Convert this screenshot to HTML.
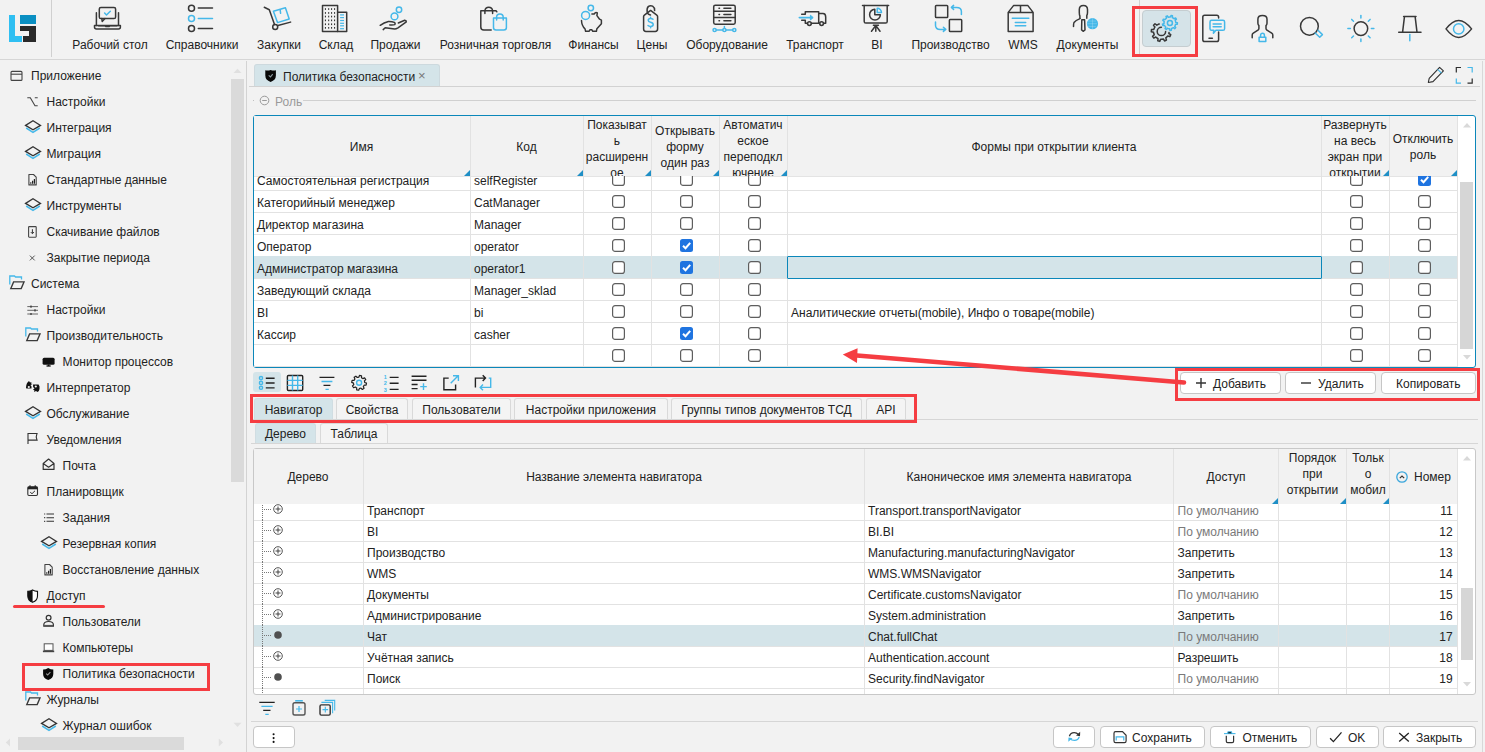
<!DOCTYPE html><html><head><meta charset="utf-8"><style>
html,body{margin:0;padding:0;}
body{width:1485px;height:752px;overflow:hidden;position:relative;background:#f2f2f2;font-family:"Liberation Sans",sans-serif;color:#222;}
.a{position:absolute;}
.t{position:absolute;font-size:12px;line-height:16px;white-space:nowrap;}
.c{text-align:center;}
.r{text-align:right;}
svg{overflow:visible}
</style></head><body>

<div class="a" style="left:0px;top:59px;width:1485px;height:1px;background:#d6d6d6"></div>
<div class="a" style="left:51px;top:0px;width:1px;height:57px;background:#d0d0d0"></div>
<div class="a" style="left:1139px;top:0px;width:1px;height:54px;background:#d0d0d0"></div>
<svg class="a" style="left:9px;top:15px;" width="28" height="28" viewBox="0 0 28 28">
<rect x="0" y="0" width="6" height="27" fill="#2fbff2"/>
<rect x="0" y="21" width="13" height="6" fill="#2fbff2"/>
<rect x="11" y="0" width="16" height="9" fill="#0a8fc2"/>
<path d="M11 11 H27 V27 H14 V21 H20 V16 H11 Z" fill="#2a2a2a"/>
</svg>
<svg class="a" style="left:88px;top:2px;" width="40" height="34" viewBox="0 0 40 34"><rect x="11.3" y="5.4" width="16.3" height="11.1" rx="1.6" stroke="#383838" stroke-width="1.5" fill="none" stroke-linecap="round" stroke-linejoin="round"/>
<path d="M13.8 16.5 L14.2 19.4 L17 16.5" stroke="#383838" stroke-width="1.5" fill="none" stroke-linecap="round" stroke-linejoin="round"/>
<path d="M16.6 11 L18.5 13 L22.3 9.2" stroke="#45b8e9" stroke-width="1.5" fill="none" stroke-linecap="round" stroke-linejoin="round"/>
<path d="M8.4 10.8 V23.5 M30.5 10.8 V23.5" stroke="#383838" stroke-width="1.5" fill="none" stroke-linecap="round" stroke-linejoin="round"/>
<path d="M6.5 23.6 H32.4 V25 Q32.4 27 30.4 27 H8.5 Q6.5 27 6.5 25 Z" stroke="#383838" stroke-width="1.5" fill="none" stroke-linecap="round" stroke-linejoin="round"/>
<path d="M10.5 23.8 H17.2 L18 24.6 H21 L21.8 23.8 H29" stroke="#383838" stroke-width="1.5" fill="none" stroke-linecap="round" stroke-linejoin="round"/></svg>
<svg class="a" style="left:182px;top:2px;" width="40" height="34" viewBox="0 0 40 34"><circle cx="9.5" cy="6.3" r="3" stroke="#383838" stroke-width="1.5" fill="none" stroke-linecap="round" stroke-linejoin="round"/><circle cx="9.5" cy="16.4" r="3" stroke="#45b8e9" stroke-width="1.5" fill="none" stroke-linecap="round" stroke-linejoin="round"/><circle cx="9.5" cy="26.4" r="3" stroke="#383838" stroke-width="1.5" fill="none" stroke-linecap="round" stroke-linejoin="round"/>
<path d="M16.3 6.1 H30.5 M16.3 26.5 H30.5" stroke="#383838" stroke-width="1.5" fill="none" stroke-linecap="round" stroke-linejoin="round"/><path d="M16.3 16.4 H30.5" stroke="#45b8e9" stroke-width="1.5" fill="none" stroke-linecap="round" stroke-linejoin="round"/></svg>
<svg class="a" style="left:258px;top:2px;" width="40" height="34" viewBox="0 0 40 34"><path d="M6.3 5.3 L11.3 7.7 L16.5 22.4" stroke="#383838" stroke-width="1.5" fill="none" stroke-linecap="round" stroke-linejoin="round"/><path d="M19.9 23.5 L32.6 20.1" stroke="#383838" stroke-width="1.5" fill="none" stroke-linecap="round" stroke-linejoin="round"/>
<circle cx="17.2" cy="25.1" r="2.5" stroke="#383838" stroke-width="1.5" fill="none" stroke-linecap="round" stroke-linejoin="round"/>
<path d="M15.4 9.3 L27.4 5.7 L31.2 17 L19.5 20.6 Z" stroke="#45b8e9" stroke-width="1.5" fill="none" stroke-linecap="round" stroke-linejoin="round"/><path d="M22.2 8.1 L22.6 11.3" stroke="#45b8e9" stroke-width="1.5" fill="none" stroke-linecap="round" stroke-linejoin="round"/></svg>
<svg class="a" style="left:315px;top:2px;" width="40" height="34" viewBox="0 0 40 34"><rect x="7.5" y="3.4" width="15.1" height="26" stroke="#383838" stroke-width="1.5" fill="none" stroke-linecap="round" stroke-linejoin="round"/><path d="M22.6 10.2 H31.7 V29.4 H22.6" stroke="#383838" stroke-width="1.5" fill="none" stroke-linecap="round" stroke-linejoin="round"/><rect x="9.9" y="6.2" width="1.1" height="1.7" fill="#383838"/><rect x="9.9" y="10.1" width="1.1" height="1.7" fill="#383838"/><rect x="9.9" y="13.7" width="1.1" height="1.7" fill="#383838"/><rect x="9.9" y="17.5" width="1.1" height="1.7" fill="#383838"/><rect x="9.9" y="21.4" width="1.1" height="1.7" fill="#383838"/><rect x="9.9" y="25.0" width="1.1" height="1.7" fill="#383838"/><rect x="13.1" y="6.2" width="1.1" height="1.7" fill="#383838"/><rect x="13.1" y="10.1" width="1.1" height="1.7" fill="#383838"/><rect x="13.1" y="13.7" width="1.1" height="1.7" fill="#383838"/><rect x="13.1" y="17.5" width="1.1" height="1.7" fill="#383838"/><rect x="13.1" y="21.4" width="1.1" height="1.7" fill="#383838"/><rect x="13.1" y="25.0" width="1.1" height="1.7" fill="#383838"/><rect x="16.0" y="6.2" width="1.1" height="1.7" fill="#383838"/><rect x="16.0" y="10.1" width="1.1" height="1.7" fill="#383838"/><rect x="16.0" y="13.7" width="1.1" height="1.7" fill="#383838"/><rect x="16.0" y="17.5" width="1.1" height="1.7" fill="#383838"/><rect x="16.0" y="21.4" width="1.1" height="1.7" fill="#383838"/><rect x="16.0" y="25.0" width="1.1" height="1.7" fill="#383838"/><rect x="19.0" y="6.2" width="1.1" height="1.7" fill="#383838"/><rect x="19.0" y="10.1" width="1.1" height="1.7" fill="#383838"/><rect x="19.0" y="13.7" width="1.1" height="1.7" fill="#383838"/><rect x="19.0" y="17.5" width="1.1" height="1.7" fill="#383838"/><rect x="19.0" y="21.4" width="1.1" height="1.7" fill="#383838"/><rect x="19.0" y="25.0" width="1.1" height="1.7" fill="#383838"/><path d="M25.1 12.9 H29" stroke="#45b8e9" stroke-width="1.2"/><path d="M25.1 15.6 H29" stroke="#45b8e9" stroke-width="1.2"/><path d="M25.1 18.5 H29" stroke="#45b8e9" stroke-width="1.2"/><path d="M25.1 21.3 H29" stroke="#45b8e9" stroke-width="1.2"/><path d="M25.1 23.8 H29" stroke="#45b8e9" stroke-width="1.2"/><path d="M25.1 26.7 H29" stroke="#45b8e9" stroke-width="1.2"/></svg>
<svg class="a" style="left:373px;top:2px;" width="40" height="34" viewBox="0 0 40 34"><circle cx="21.5" cy="14.4" r="3.4" stroke="#45b8e9" stroke-width="1.5" fill="none" stroke-linecap="round" stroke-linejoin="round"/><circle cx="26" cy="7.7" r="2.7" stroke="#45b8e9" stroke-width="1.5" fill="none" stroke-linecap="round" stroke-linejoin="round"/>
<path d="M7.2 23.3 Q11 20.6 15.4 19.5 Q19 19.4 21.3 20.4 Q22.8 21.6 21.6 22.6 Q20.5 23.1 16.7 22.9" stroke="#383838" stroke-width="1.5" fill="none" stroke-linecap="round" stroke-linejoin="round"/>
<path d="M10.2 27.6 L12.2 25.8 L21.7 27.1 Q23 27 25 25.8 L33.3 19.8 Q33.5 18.6 31.7 18.3 L25.3 21" stroke="#383838" stroke-width="1.5" fill="none" stroke-linecap="round" stroke-linejoin="round"/></svg>
<svg class="a" style="left:474px;top:2px;" width="40" height="34" viewBox="0 0 40 34"><path d="M17.2 28 H9.8 Q6.8 28 6.8 25 V8.8 H22 L22.8 9.8" stroke="#383838" stroke-width="1.5" fill="none" stroke-linecap="round" stroke-linejoin="round"/>
<path d="M10.9 11.5 V8.5 A3.9 3.9 0 0 1 18.6 8.5 V11.5" stroke="#383838" stroke-width="1.5" fill="none" stroke-linecap="round" stroke-linejoin="round"/>
<path d="M19.5 16 H32.4 V25.5 Q32.4 28 29.9 28 H22 Q19.5 28 19.5 25.5 Z" stroke="#45b8e9" stroke-width="1.5" fill="none" stroke-linecap="round" stroke-linejoin="round"/>
<path d="M22.6 18.1 V15.3 A3.3 3.3 0 0 1 29.2 15.3 V18.1" stroke="#45b8e9" stroke-width="1.5" fill="none" stroke-linecap="round" stroke-linejoin="round"/></svg>
<svg class="a" style="left:572px;top:2px;" width="40" height="34" viewBox="0 0 40 34"><circle cx="13.6" cy="13.4" r="4" stroke="#45b8e9" stroke-width="1.5" fill="none" stroke-linecap="round" stroke-linejoin="round"/><circle cx="18.8" cy="6" r="2.7" stroke="#45b8e9" stroke-width="1.5" fill="none" stroke-linecap="round" stroke-linejoin="round"/>
<path d="M9.5 18.5 Q9.6 23.5 13.1 27.1 L13.6 29.3 H17.2 L17.9 27.8 H19.9 L20.8 29.3 H24.4 L24.9 26.7 L29.4 21.7 V18.1 L27.6 17.2 L24.9 13.6 L25.3 10.9 Q24.4 10.2 23.5 10.6 L22.2 12 H19.9" stroke="#383838" stroke-width="1.5" fill="none" stroke-linecap="round" stroke-linejoin="round"/></svg>
<svg class="a" style="left:632px;top:2px;" width="40" height="34" viewBox="0 0 40 34"><path d="M11.6 27 V14.6 Q11.6 13.7 12.4 13.1 L18.6 8.4 L24.8 13.1 Q25.6 13.7 25.6 14.6 V27 Q25.6 29.4 23.2 29.4 H14 Q11.6 29.4 11.6 27 Z" stroke="#383838" stroke-width="1.5" fill="none" stroke-linecap="round" stroke-linejoin="round"/>
<path d="M18.5 13 Q15.6 12.6 15.2 10 Q14.6 6 16.5 4.4 Q18.5 3 20.6 4.2 Q22.8 5.6 22.6 8.6" stroke="#383838" stroke-width="1.5" fill="none" stroke-linecap="round" stroke-linejoin="round"/>
<path d="M21 17.3 Q20.2 16.5 18.6 16.5 Q16.2 16.5 16.2 18.3 Q16.2 19.7 18.6 20.3 Q21.2 20.9 21.2 22.6 Q21.2 24.5 18.6 24.5 Q16.8 24.5 16 23.6 M18.6 15.3 V16.5 M18.6 24.5 V25.8" stroke="#45b8e9" stroke-width="1.5" fill="none" stroke-linecap="round" stroke-linejoin="round"/></svg>
<svg class="a" style="left:704px;top:2px;" width="40" height="34" viewBox="0 0 40 34"><rect x="9.7" y="3.2" width="21.5" height="19" rx="1.6" stroke="#383838" stroke-width="1.5" fill="none" stroke-linecap="round" stroke-linejoin="round"/>
<path d="M9.7 9.3 H31.2 M9.7 15.4 H31.2" stroke="#383838" stroke-width="1.5" fill="none" stroke-linecap="round" stroke-linejoin="round"/>
<path d="M15 6.3 H15.5 M15 12.4 H15.5 M15 18.7 H15.5 M19.9 6.3 H26.9 M19.9 12.4 H26.9 M19.9 18.7 H26.9" stroke="#383838" stroke-width="1.5" fill="none" stroke-linecap="round" stroke-linejoin="round"/>
<path d="M12.3 28 H18.7 M22.1 28 H28.6 M20.4 24.6 V26.3" stroke="#45b8e9" stroke-width="1.5" fill="none" stroke-linecap="round" stroke-linejoin="round"/>
<circle cx="10.6" cy="28" r="1.6" stroke="#45b8e9" stroke-width="1.5" fill="none" stroke-linecap="round" stroke-linejoin="round"/><circle cx="20.4" cy="28" r="1.6" stroke="#45b8e9" stroke-width="1.5" fill="none" stroke-linecap="round" stroke-linejoin="round"/><circle cx="30.3" cy="28" r="1.6" stroke="#45b8e9" stroke-width="1.5" fill="none" stroke-linecap="round" stroke-linejoin="round"/></svg>
<svg class="a" style="left:792px;top:2px;" width="40" height="34" viewBox="0 0 40 34"><path d="M9.7 12.2 H13.3 V9.7 H26.7 V21.3 H19.4" stroke="#383838" stroke-width="1.5" fill="none" stroke-linecap="round" stroke-linejoin="round"/>
<path d="M9.7 18.3 H13.3 V21.3 H15.5" stroke="#383838" stroke-width="1.5" fill="none" stroke-linecap="round" stroke-linejoin="round"/>
<path d="M26.7 11.5 H31 Q33.7 11.5 33.7 15 V21.3 H31.5 M27.7 21.3 H26.7" stroke="#383838" stroke-width="1.5" fill="none" stroke-linecap="round" stroke-linejoin="round"/>
<circle cx="17.4" cy="21.6" r="1.9" stroke="#383838" stroke-width="1.5" fill="none" stroke-linecap="round" stroke-linejoin="round"/><circle cx="29.6" cy="21.6" r="1.9" stroke="#383838" stroke-width="1.5" fill="none" stroke-linecap="round" stroke-linejoin="round"/>
<path d="M7.3 15.6 H19" stroke="#45b8e9" stroke-width="1.6" stroke-linecap="round"/><path d="M18.4 13.2 L21.2 15.6 L18.4 18 Z" fill="#45b8e9" stroke="#45b8e9" stroke-width="1" stroke-linejoin="round"/></svg>
<svg class="a" style="left:856px;top:2px;" width="40" height="34" viewBox="0 0 40 34"><path d="M6.5 3.6 H32.6" stroke="#383838" stroke-width="1.5" fill="none" stroke-linecap="round" stroke-linejoin="round"/><path d="M8.2 3.6 V19.4 Q8.2 21 9.8 21 H29.6 Q31.2 21 31.2 19.4 V3.6" stroke="#383838" stroke-width="1.5" fill="none" stroke-linecap="round" stroke-linejoin="round"/>
<path d="M17.4 23.3 H22.4 M19.8 23.5 V29.3 M19.8 23.5 L15.5 29.3 M19.8 23.5 L24 29.3" stroke="#383838" stroke-width="1.5" fill="none" stroke-linecap="round" stroke-linejoin="round"/>
<path d="M18.8 7.2 A5.4 5.4 0 1 0 24.4 12.8 H18.8 Z" stroke="#383838" stroke-width="1.5" fill="none" stroke-linecap="round" stroke-linejoin="round"/>
<path d="M21.2 6.2 A4.3 4.3 0 0 1 25.5 10.5 H21.2 Z" stroke="#45b8e9" stroke-width="1.5" fill="none" stroke-linecap="round" stroke-linejoin="round"/></svg>
<svg class="a" style="left:928px;top:2px;" width="40" height="34" viewBox="0 0 40 34"><rect x="7.5" y="3.4" width="12.2" height="12.2" rx="0.8" stroke="#383838" stroke-width="1.5" fill="none" stroke-linecap="round" stroke-linejoin="round"/><rect x="21.4" y="17.4" width="12.3" height="12.2" rx="0.8" stroke="#383838" stroke-width="1.5" fill="none" stroke-linecap="round" stroke-linejoin="round"/>
<path d="M33.4 12.6 V9.5 Q33.4 5.4 28.6 5.4 H23.6 M25.6 3.4 L23.4 5.4 L25.6 7.5" stroke="#45b8e9" stroke-width="1.5" fill="none" stroke-linecap="round" stroke-linejoin="round"/>
<path d="M7.5 20.1 V23.2 Q7.5 27.4 12.2 27.4 H17.6 M15.4 25.3 L17.8 27.4 L15.4 29.4" stroke="#45b8e9" stroke-width="1.5" fill="none" stroke-linecap="round" stroke-linejoin="round"/></svg>
<svg class="a" style="left:1001px;top:2px;" width="40" height="34" viewBox="0 0 40 34"><path d="M7.2 10.4 H32.1 V29.4 H7.2 Z M7.2 10.4 L12.7 3.4 H26.7 L32.1 10.4 M19.5 3.4 V10.4" stroke="#383838" stroke-width="1.5" fill="none" stroke-linecap="round" stroke-linejoin="round"/>
<path d="M11.3 16.3 H27.8 M14.3 20.4 H24.7 M14.3 23.8 H24.7" stroke="#45b8e9" stroke-width="1.5" fill="none" stroke-linecap="round" stroke-linejoin="round"/></svg>
<svg class="a" style="left:1066px;top:2px;" width="40" height="34" viewBox="0 0 40 34"><path d="M13.9 16.3 V14 Q13.3 13 13.3 10.5 V7.5 Q13.3 3.4 17.4 3.4 Q21.5 3.4 21.5 7.5 V10.5 Q21.5 12.5 20.8 13.5 V16.3" stroke="#383838" stroke-width="1.5" fill="none" stroke-linecap="round" stroke-linejoin="round"/>
<path d="M14 16.6 Q9.5 18.5 8 20.5 Q7.5 21.5 7.5 24.4" stroke="#383838" stroke-width="1.5" fill="none" stroke-linecap="round" stroke-linejoin="round"/>
<path d="M15.8 17.8 H18.6 L19 27.9 L17.4 29.3 L15.6 27.9 Z" stroke="#383838" stroke-width="1.5" fill="none" stroke-linecap="round" stroke-linejoin="round"/>
<circle cx="26.5" cy="21.7" r="5.6" fill="#45b8e9"/>
<path d="M21.5 21.7 H31.5 M26.5 16.5 V27 M22.5 19 H30.5 M22.5 24.4 H30.5" stroke="#fff" stroke-width="0.5" stroke-dasharray="1 1" opacity="0.8"/></svg>
<div class="a" style="left:1142px;top:10px;width:49px;height:37px;background:#d5e3e8;border:1px solid #c5cdd0;border-radius:4px;box-sizing:border-box"></div>
<svg class="a" style="left:1146px;top:10px;" width="40" height="36" viewBox="0 0 40 36"><path d="M23.90 7.00 L24.40 7.02 L25.05 5.49 L26.47 5.85 L26.30 7.51 L27.70 8.38 L28.06 8.72 L29.55 7.96 L30.40 9.16 L29.20 10.32 L29.71 11.88 L29.78 12.37 L31.40 12.75 L31.29 14.21 L29.62 14.33 L29.01 15.85 L28.74 16.27 L29.74 17.60 L28.72 18.65 L27.36 17.68 L25.91 18.45 L25.44 18.59 L25.35 20.26 L23.89 20.40 L23.48 18.79 L21.88 18.44 L21.42 18.25 L20.28 19.47 L19.07 18.64 L19.80 17.14 L18.79 15.85 L18.56 15.41 L16.91 15.61 L16.51 14.20 L18.03 13.51 L18.09 11.87 L18.20 11.39 L16.80 10.48 L17.41 9.14 L19.01 9.60 L20.11 8.38 L20.50 8.08 L20.02 6.48 L21.34 5.85 L22.28 7.23 Z" stroke="#45b8e9" stroke-width="1.5" fill="none" stroke-linecap="round" stroke-linejoin="round" stroke-width="1.3"/><circle cx="23.9" cy="12.9" r="2.5" stroke="#45b8e9" stroke-width="1.5" fill="none" stroke-linecap="round" stroke-linejoin="round" stroke-width="1.4"/>
<path d="M19.6 21.4 A4.2 4.2 0 1 1 15.4 17.2" stroke="#383838" stroke-width="1.5" fill="none" stroke-linecap="round" stroke-linejoin="round" stroke-width="1.4"/></svg>
<svg class="a" style="left:1146px;top:10px;" width="40" height="36" viewBox="0 0 40 36"><path d="M23.04 22.43 L22.84 23.50 L24.76 24.74 L23.88 26.63 L21.70 25.96 L20.63 27.19 L19.79 27.88 L20.47 30.06 L18.58 30.95 L17.34 29.03 L15.73 29.29 L14.64 29.27 L13.76 31.38 L11.74 30.84 L12.02 28.58 L10.62 27.74 L9.80 27.03 L7.77 28.08 L6.56 26.37 L8.24 24.81 L7.70 23.27 L7.53 22.20 L5.30 21.70 L5.48 19.61 L7.76 19.50 L8.34 17.97 L8.90 17.04 L7.51 15.22 L8.99 13.74 L10.81 15.12 L12.24 14.33 L13.26 13.97" stroke="#383838" stroke-width="1.5" fill="none" stroke-linecap="round" stroke-linejoin="round" stroke-width="1.3"/></svg>
<svg class="a" style="left:1198px;top:10px;" width="35" height="36" viewBox="0 0 35 36"><path d="M20.6 8 V7.1 Q20.6 5.3 18.8 5.3 H6.6 Q4.8 5.3 4.8 7.1 V29.8 Q4.8 31.6 6.6 31.6 H18.8 Q20.6 31.6 20.6 29.8 V22" stroke="#383838" stroke-width="1.5" fill="none" stroke-linecap="round" stroke-linejoin="round"/><path d="M11 28.2 H14.4" stroke="#383838" stroke-width="1.5" fill="none" stroke-linecap="round" stroke-linejoin="round"/>
<path d="M13.5 10.3 H25 Q26.6 10.3 26.6 11.9 V18.7 Q26.6 20.3 25 20.3 H17.9 L15.4 23.2 L15.8 20.3 H13.5 Q12 20.3 12 18.7 V11.9 Q12 10.3 13.5 10.3 Z" stroke="#45b8e9" stroke-width="1.5" fill="none" stroke-linecap="round" stroke-linejoin="round"/>
<path d="M15.1 13.9 H23.2 M15.1 16.7 H23.2" stroke="#45b8e9" stroke-width="1.5" fill="none" stroke-linecap="round" stroke-linejoin="round" stroke-width="1.3"/></svg>
<svg class="a" style="left:1245px;top:10px;" width="35" height="36" viewBox="0 0 35 36"><path d="M7.2 27.7 V25 Q7.2 23.8 8.3 23.1 L13.3 19.8 Q13.9 19.4 13.9 18.6 V15.6 Q12.9 14.6 12.9 13.2 V9.2 Q12.9 5.5 17.45 5.5 Q22 5.5 22 9.2 V13.2 Q22 14.6 21 15.6 V18.6 Q21 19.4 21.6 19.8 L26.7 23.1 Q27.8 23.8 27.8 25 V27.7" stroke="#383838" stroke-width="1.5" fill="none" stroke-linecap="round" stroke-linejoin="round"/>
<rect x="14.1" y="27.3" width="6.7" height="4.3" stroke="#45b8e9" stroke-width="1.5" fill="none" stroke-linecap="round" stroke-linejoin="round"/><path d="M15.6 27.3 V25.2 A1.9 1.9 0 0 1 19.4 25.2 V27.3" stroke="#45b8e9" stroke-width="1.5" fill="none" stroke-linecap="round" stroke-linejoin="round"/></svg>
<svg class="a" style="left:1290px;top:12px;" width="40" height="34" viewBox="0 0 40 34"><circle cx="19.4" cy="14.3" r="8.9" stroke="#383838" stroke-width="1.5" fill="none" stroke-linecap="round" stroke-linejoin="round"/><path d="M25.2 21 L29.7 25.2 L32.4 22.6 L28 18.2" stroke="#45b8e9" stroke-width="1.5" fill="none" stroke-linecap="round" stroke-linejoin="round" stroke-linejoin="miter"/></svg>
<svg class="a" style="left:1345px;top:12px;" width="32" height="34" viewBox="0 0 32 34"><circle cx="15.9" cy="16.6" r="6.8" stroke="#383838" stroke-width="1.5" fill="none" stroke-linecap="round" stroke-linejoin="round"/><path d="M26.40 16.60 L28.90 16.60" stroke="#45b8e9" stroke-width="1.5" fill="none" stroke-linecap="round" stroke-linejoin="round" stroke-linecap="butt" stroke-width="1.7"/><path d="M23.32 24.02 L25.09 25.79" stroke="#45b8e9" stroke-width="1.5" fill="none" stroke-linecap="round" stroke-linejoin="round" stroke-linecap="butt" stroke-width="1.7"/><path d="M15.90 27.10 L15.90 29.60" stroke="#45b8e9" stroke-width="1.5" fill="none" stroke-linecap="round" stroke-linejoin="round" stroke-linecap="butt" stroke-width="1.7"/><path d="M8.48 24.02 L6.71 25.79" stroke="#45b8e9" stroke-width="1.5" fill="none" stroke-linecap="round" stroke-linejoin="round" stroke-linecap="butt" stroke-width="1.7"/><path d="M5.40 16.60 L2.90 16.60" stroke="#45b8e9" stroke-width="1.5" fill="none" stroke-linecap="round" stroke-linejoin="round" stroke-linecap="butt" stroke-width="1.7"/><path d="M8.48 9.18 L6.71 7.41" stroke="#45b8e9" stroke-width="1.5" fill="none" stroke-linecap="round" stroke-linejoin="round" stroke-linecap="butt" stroke-width="1.7"/><path d="M15.90 6.10 L15.90 3.60" stroke="#45b8e9" stroke-width="1.5" fill="none" stroke-linecap="round" stroke-linejoin="round" stroke-linecap="butt" stroke-width="1.7"/><path d="M23.32 9.18 L25.09 7.41" stroke="#45b8e9" stroke-width="1.5" fill="none" stroke-linecap="round" stroke-linejoin="round" stroke-linecap="butt" stroke-width="1.7"/></svg>
<svg class="a" style="left:1395px;top:12px;" width="30" height="34" viewBox="0 0 30 34"><path d="M8.6 4.4 H21 M9.5 4.4 L7.6 20.2 M20.1 4.4 L22 20.2 M3.7 20.2 H26" stroke="#383838" stroke-width="1.5" fill="none" stroke-linecap="round" stroke-linejoin="round"/><path d="M14.8 22.6 V28.8" stroke="#45b8e9" stroke-width="1.5" fill="none" stroke-linecap="round" stroke-linejoin="round" stroke-width="1.7"/></svg>
<svg class="a" style="left:1440px;top:12px;" width="40" height="34" viewBox="0 0 40 34"><path d="M6 16.9 Q12.5 8.4 18.7 8.4 Q24.9 8.4 31.6 16.9 Q24.9 25.4 18.7 25.4 Q12.5 25.4 6 16.9 Z" stroke="#383838" stroke-width="1.5" fill="none" stroke-linecap="round" stroke-linejoin="round"/><circle cx="18.7" cy="16.9" r="5.2" stroke="#45b8e9" stroke-width="1.5" fill="none" stroke-linecap="round" stroke-linejoin="round"/></svg>
<div class="t c " style="left:10.0px;width:200px;top:37px;">Рабочий стол</div>
<div class="t c " style="left:102.0px;width:200px;top:37px;">Справочники</div>
<div class="t c " style="left:179.0px;width:200px;top:37px;">Закупки</div>
<div class="t c " style="left:236.0px;width:200px;top:37px;">Склад</div>
<div class="t c " style="left:295.5px;width:200px;top:37px;">Продажи</div>
<div class="t c " style="left:395.5px;width:200px;top:37px;">Розничная торговля</div>
<div class="t c " style="left:493.5px;width:200px;top:37px;">Финансы</div>
<div class="t c " style="left:552.0px;width:200px;top:37px;">Цены</div>
<div class="t c " style="left:627.0px;width:200px;top:37px;">Оборудование</div>
<div class="t c " style="left:715.0px;width:200px;top:37px;">Транспорт</div>
<div class="t c " style="left:777.0px;width:200px;top:37px;">BI</div>
<div class="t c " style="left:850.5px;width:200px;top:37px;">Производство</div>
<div class="t c " style="left:923.0px;width:200px;top:37px;">WMS</div>
<div class="t c " style="left:987.5px;width:200px;top:37px;">Документы</div>
<div class="t " style="left:31px;top:68px;">Приложение</div>
<svg class="a" style="left:0px;top:66px;" width="70" height="20" viewBox="0 0 70 20"><rect x="11" y="5.4" width="11" height="9" rx="1" stroke="#444" stroke-width="1.1" fill="none" stroke-linejoin="round"/><path d="M11 8.2 H22" stroke="#444" stroke-width="1.1" fill="none" stroke-linejoin="round"/></svg>
<div class="t " style="left:46.5px;top:94px;">Настройки</div>
<svg class="a" style="left:0px;top:92px;" width="70" height="20" viewBox="0 0 70 20"><path d="M27.3 5.699999999999999 H30.3 L35 13.8 H37.7 M34.8 5.699999999999999 H37.7" stroke="#444" stroke-width="1.1" fill="none"/></svg>
<div class="t " style="left:46.5px;top:120px;">Интеграция</div>
<svg class="a" style="left:0px;top:118px;" width="70" height="20" viewBox="0 0 70 20"><path d="M25.6 7.4 L33 2.8000000000000007 L40.5 7.4 L33 11.8 Z" stroke="#333" stroke-width="1.3" fill="none" stroke-linejoin="miter"/><path d="M26.2 10 L33 14.4 L39.8 10" stroke="#45b8e9" stroke-width="1.5" fill="none"/></svg>
<div class="t " style="left:46.5px;top:146px;">Миграция</div>
<svg class="a" style="left:0px;top:144px;" width="70" height="20" viewBox="0 0 70 20"><path d="M25.6 7.4 L33 2.8000000000000007 L40.5 7.4 L33 11.8 Z" stroke="#333" stroke-width="1.3" fill="none" stroke-linejoin="miter"/><path d="M26.2 10 L33 14.4 L39.8 10" stroke="#45b8e9" stroke-width="1.5" fill="none"/></svg>
<div class="t " style="left:46.5px;top:172px;">Стандартные данные</div>
<svg class="a" style="left:0px;top:170px;" width="70" height="20" viewBox="0 0 70 20"><path d="M28.9 4.5 H33.5 L36.2 7.2 V14.9 H28.9 Z" stroke="#444" stroke-width="1.1" fill="none" stroke-linejoin="round"/><path d="M30.8 13.7 V12.2 M32.6 13.7 V10.7 M34.4 13.7 V9" stroke="#222" stroke-width="1.2"/></svg>
<div class="t " style="left:46.5px;top:198px;">Инструменты</div>
<svg class="a" style="left:0px;top:196px;" width="70" height="20" viewBox="0 0 70 20"><path d="M25.6 7.4 L33 2.8000000000000007 L40.5 7.4 L33 11.8 Z" stroke="#333" stroke-width="1.3" fill="none" stroke-linejoin="miter"/><path d="M26.2 10 L33 14.4 L39.8 10" stroke="#45b8e9" stroke-width="1.5" fill="none"/></svg>
<div class="t " style="left:46.5px;top:224px;">Скачивание файлов</div>
<svg class="a" style="left:0px;top:222px;" width="70" height="20" viewBox="0 0 70 20"><rect x="28.6" y="4.6" width="7.6" height="10.6" rx="0.6" stroke="#444" stroke-width="1.1" fill="none" stroke-linejoin="round"/><path d="M32.4 7.2 V11.5 M30.8 10.1 L32.4 11.7 L34 10.1" stroke="#333" stroke-width="1" fill="none"/></svg>
<div class="t " style="left:46.5px;top:250px;">Закрытие периода</div>
<svg class="a" style="left:0px;top:248px;" width="70" height="20" viewBox="0 0 70 20"><path d="M29.9 7.6 L34.7 12.4 M34.7 7.6 L29.9 12.4" stroke="#555" stroke-width="1"/></svg>
<div class="t " style="left:31px;top:276px;">Система</div>
<svg class="a" style="left:0px;top:274px;" width="70" height="20" viewBox="0 0 70 20"><path d="M9.8 10.5 V2 H14.5 L15.5 3 H21.5 V5.5" stroke="#45b8e9" stroke-width="1.3" fill="none"/><path d="M13.6 7.9 H24 L21.2 14.6 H10.8 Z" stroke="#3a3a3a" stroke-width="1.4" fill="none" stroke-linejoin="miter"/></svg>
<div class="t " style="left:46.5px;top:302px;">Настройки</div>
<svg class="a" style="left:0px;top:300px;" width="70" height="20" viewBox="0 0 70 20"><path d="M27.3 6.6 H38 M27.3 10.3 H38 M27.3 14 H38" stroke="#666" stroke-width="1"/><path d="M31 5.5 V7.7 M35 9.2 V11.4 M31 12.9 V15" stroke="#333" stroke-width="1.2"/></svg>
<div class="t " style="left:46.5px;top:328px;">Производительность</div>
<svg class="a" style="left:16px;top:326px;" width="70" height="20" viewBox="0 0 70 20"><path d="M9.8 10.5 V2 H14.5 L15.5 3 H21.5 V5.5" stroke="#45b8e9" stroke-width="1.3" fill="none"/><path d="M13.6 7.9 H24 L21.2 14.6 H10.8 Z" stroke="#3a3a3a" stroke-width="1.4" fill="none" stroke-linejoin="miter"/></svg>
<div class="t " style="left:62.5px;top:354px;">Монитор процессов</div>
<svg class="a" style="left:0px;top:352px;" width="70" height="20" viewBox="0 0 70 20"><rect x="42.6" y="5.800000000000001" width="12" height="7" rx="1.5" fill="#111"/><path d="M46.5 14 H50.7" stroke="#111" stroke-width="1.3"/><path d="M48.6 12.5 V14" stroke="#111" stroke-width="1.5"/></svg>
<div class="t " style="left:46.5px;top:380px;">Интерпретатор</div>
<svg class="a" style="left:0px;top:378px;" width="70" height="20" viewBox="0 0 70 20"><path d="M26 10 Q26 5 29 3 L30 4.5 L31.5 4 L31 5.5 L32.5 6 L30.5 7 Q32 8 31.5 10.5 H26.5 Z" fill="#111"/><circle cx="28.8" cy="9" r="1.1" fill="#f2f2f2"/><path d="M33 6.5 H38.6 Q40 8 39.5 11 Q39 14 37.5 14 L36 13 L34 14 L34.5 12.5 L33 11.5 L34.5 10.5 Q32.5 9.5 33 6.5 Z" fill="#111"/><circle cx="35.8" cy="8.5" r="1.1" fill="#f2f2f2"/></svg>
<div class="t " style="left:46.5px;top:406px;">Обслуживание</div>
<svg class="a" style="left:0px;top:404px;" width="70" height="20" viewBox="0 0 70 20"><path d="M25.6 7.4 L33 2.8000000000000007 L40.5 7.4 L33 11.8 Z" stroke="#333" stroke-width="1.3" fill="none" stroke-linejoin="miter"/><path d="M26.2 10 L33 14.4 L39.8 10" stroke="#45b8e9" stroke-width="1.5" fill="none"/></svg>
<div class="t " style="left:46.5px;top:432px;">Уведомления</div>
<svg class="a" style="left:0px;top:430px;" width="70" height="20" viewBox="0 0 70 20"><path d="M28 14 V3.5 H37 Q35.5 6.8 37 10.1 H28" stroke="#333" stroke-width="1.1" fill="none"/></svg>
<div class="t " style="left:62.5px;top:458px;">Почта</div>
<svg class="a" style="left:0px;top:456px;" width="70" height="20" viewBox="0 0 70 20"><path d="M43.2 7.5 L48.6 3 L54 7.5 V13.4 H43.2 Z M43.2 7.5 L48.6 11.2 L54 7.5" stroke="#333" stroke-width="1.2" fill="none" stroke-linejoin="round"/></svg>
<div class="t " style="left:46.5px;top:484px;">Планировщик</div>
<svg class="a" style="left:0px;top:482px;" width="70" height="20" viewBox="0 0 70 20"><rect x="27.8" y="4.699999999999999" width="9.7" height="8.8" rx="1.2" stroke="#333" stroke-width="1.1" fill="none"/><rect x="27.8" y="4.699999999999999" width="9.7" height="2.6" fill="#222"/><path d="M30 3.1999999999999993 V5.199999999999999 M35.2 3.1999999999999993 V5.199999999999999" stroke="#222" stroke-width="1.1"/><path d="M30.2 10.2 L32 11.7 L35 8.8" stroke="#333" stroke-width="1" fill="none"/></svg>
<div class="t " style="left:62.5px;top:510px;">Задания</div>
<svg class="a" style="left:0px;top:508px;" width="70" height="20" viewBox="0 0 70 20"><path d="M46.5 6 H54 M46.5 9.7 H54 M46.5 13.3 H54" stroke="#333" stroke-width="1.1"/><path d="M44.2 6 H45.2 M44.2 9.7 H45.2 M44.2 13.3 H45.2" stroke="#222" stroke-width="1.2"/></svg>
<div class="t " style="left:62.5px;top:536px;">Резервная копия</div>
<svg class="a" style="left:16px;top:534px;" width="70" height="20" viewBox="0 0 70 20"><path d="M25.6 7.4 L33 2.8000000000000007 L40.5 7.4 L33 11.8 Z" stroke="#333" stroke-width="1.3" fill="none" stroke-linejoin="miter"/><path d="M26.2 10 L33 14.4 L39.8 10" stroke="#45b8e9" stroke-width="1.5" fill="none"/></svg>
<div class="t " style="left:62.5px;top:562px;">Восстановление данных</div>
<svg class="a" style="left:16px;top:560px;" width="70" height="20" viewBox="0 0 70 20"><path d="M28.9 4.5 H33.5 L36.2 7.2 V14.9 H28.9 Z" stroke="#444" stroke-width="1.1" fill="none" stroke-linejoin="round"/><path d="M30.8 13.7 V12.2 M32.6 13.7 V10.7 M34.4 13.7 V9" stroke="#222" stroke-width="1.2"/></svg>
<div class="t " style="left:46.5px;top:588px;">Доступ</div>
<svg class="a" style="left:0px;top:586px;" width="70" height="20" viewBox="0 0 70 20"><path d="M32.6 4 Q30 5.5 27.8 5.4 V10 Q27.8 14.5 32.6 16.3 Q37.5 14.5 37.5 10 V5.4 Q35.2 5.5 32.6 4 Z" stroke="#111" stroke-width="1.1" fill="#fff"/><path d="M32.6 4 Q30 5.5 27.8 5.4 V10 Q27.8 14.5 32.6 16.3 Z" fill="#111"/></svg>
<div class="t " style="left:62.5px;top:614px;">Пользователи</div>
<svg class="a" style="left:0px;top:612px;" width="70" height="20" viewBox="0 0 70 20"><circle cx="48.6" cy="5.699999999999999" r="2.4" stroke="#333" stroke-width="1.2" fill="none"/><path d="M43.8 14.2 V12.8 Q43.8 9.5 48.6 9.5 Q53.4 9.5 53.4 12.8 V14.2 Z" stroke="#333" stroke-width="1.2" fill="none"/><path d="M44 13.7 H53.2" stroke="#555" stroke-width="1.6"/></svg>
<div class="t " style="left:62.5px;top:640px;">Компьютеры</div>
<svg class="a" style="left:0px;top:638px;" width="70" height="20" viewBox="0 0 70 20"><rect x="44.2" y="5.800000000000001" width="8.8" height="6.6" stroke="#555" stroke-width="1" fill="#fff"/><path d="M42.9 13.4 H54.2" stroke="#444" stroke-width="1.6"/></svg>
<div class="t " style="left:62.5px;top:666px;">Политика безопасности</div>
<svg class="a" style="left:0px;top:664px;" width="70" height="20" viewBox="0 0 70 20"><path d="M48.2 4 Q45.5 5.699999999999999 43.1 5.6 V10 Q43.1 14.5 48.2 16 Q53.3 14.5 53.3 10 V5.6 Q50.9 5.699999999999999 48.2 4 Z" fill="#0a0a0a"/><path d="M46.2 9.6 L47.7 11 L50.4 8.2" stroke="#9a9a9a" stroke-width="1.1" fill="none"/></svg>
<div class="t " style="left:46.5px;top:692px;">Журналы</div>
<svg class="a" style="left:16px;top:690px;" width="70" height="20" viewBox="0 0 70 20"><path d="M9.8 10.5 V2 H14.5 L15.5 3 H21.5 V5.5" stroke="#45b8e9" stroke-width="1.3" fill="none"/><path d="M13.6 7.9 H24 L21.2 14.6 H10.8 Z" stroke="#3a3a3a" stroke-width="1.4" fill="none" stroke-linejoin="miter"/></svg>
<div class="t " style="left:62.5px;top:718px;">Журнал ошибок</div>
<svg class="a" style="left:16px;top:716px;" width="70" height="20" viewBox="0 0 70 20"><path d="M25.6 7.4 L33 2.8000000000000007 L40.5 7.4 L33 11.8 Z" stroke="#333" stroke-width="1.3" fill="none" stroke-linejoin="miter"/><path d="M26.2 10 L33 14.4 L39.8 10" stroke="#45b8e9" stroke-width="1.5" fill="none"/></svg>
<div class="a" style="left:231px;top:79px;width:13px;height:403px;background:#dadada"></div>
<div class="a" style="left:246px;top:61px;width:1px;height:691px;background:#d3d3d3"></div>
<div class="a" style="left:18px;top:737px;width:166px;height:13px;background:#dadada"></div>
<div class="a" style="left:1482px;top:61px;width:1px;height:691px;background:#d8d8d8"></div>
<div class="a" style="left:254px;top:64px;width:186px;height:23px;background:#d4e4e9;border:1px solid #cdd9de;border-bottom:none;border-radius:3px 3px 0 0;box-sizing:border-box"></div>
<div class="a" style="left:249px;top:86px;width:1231px;height:1px;background:#d2d2d2"></div>
<div class="t " style="left:283px;top:69px;">Политика безопасности</div>
<div class="t " style="left:418px;top:68px;color:#777;font-size:13px">×</div>
<div class="a" style="left:253px;top:100px;width:1px;height:1px;background:#c0c0c0"></div>
<div class="a" style="left:303px;top:100px;width:1173px;height:1px;background:#d0d0d0"></div>
<div class="t " style="left:275px;top:94px;color:#9a9a9a">Роль</div>
<div class="a" style="left:253px;top:115px;width:1223px;height:253px;background:#fff;border:1px solid #0b87ba;border-radius:3px;box-sizing:border-box"></div>
<div class="a" style="left:254px;top:116px;width:1203px;height:60px;background:#f2f2f2"></div>
<div class="a" style="left:470px;top:116px;width:1px;height:251px;background:#e2e2e2"></div>
<div class="a" style="left:583px;top:116px;width:1px;height:251px;background:#e2e2e2"></div>
<div class="a" style="left:651px;top:116px;width:1px;height:251px;background:#e2e2e2"></div>
<div class="a" style="left:719px;top:116px;width:1px;height:251px;background:#e2e2e2"></div>
<div class="a" style="left:787px;top:116px;width:1px;height:251px;background:#e2e2e2"></div>
<div class="a" style="left:1321px;top:116px;width:1px;height:251px;background:#e2e2e2"></div>
<div class="a" style="left:1389px;top:116px;width:1px;height:251px;background:#e2e2e2"></div>
<div class="a" style="left:1457px;top:116px;width:1px;height:251px;background:#e2e2e2"></div>
<div class="a" style="left:254px;top:116px;width:1203px;height:60px;overflow:hidden">
<div class="t c " style="left:7.5px;width:200px;top:23px;">Имя</div>
<div class="t c " style="left:222.5px;width:100px;top:23px;">Код</div>
<div class="t c " style="left:328.0px;width:70px;top:0.5px;">Показыват</div>
<div class="t c " style="left:328.0px;width:70px;top:16.5px;">ь</div>
<div class="t c " style="left:328.0px;width:70px;top:32.5px;">расширенн</div>
<div class="t c " style="left:328.0px;width:70px;top:48.5px;">ое</div>
<div class="t c " style="left:396.0px;width:70px;top:6.5px;">Открывать</div>
<div class="t c " style="left:396.0px;width:70px;top:22.5px;">форму</div>
<div class="t c " style="left:396.0px;width:70px;top:38.5px;">один раз</div>
<div class="t c " style="left:464.0px;width:70px;top:0.5px;">Автоматич</div>
<div class="t c " style="left:464.0px;width:70px;top:16.5px;">еское</div>
<div class="t c " style="left:464.0px;width:70px;top:32.5px;">переподкл</div>
<div class="t c " style="left:464.0px;width:70px;top:48.5px;">ючение</div>
<div class="t c " style="left:650.0px;width:300px;top:23px;">Формы при открытии клиента</div>
<div class="t c " style="left:1066.0px;width:70px;top:1px;">Развернуть</div>
<div class="t c " style="left:1066.0px;width:70px;top:17px;">на весь</div>
<div class="t c " style="left:1066.0px;width:70px;top:33px;">экран при</div>
<div class="t c " style="left:1066.0px;width:70px;top:49px;">открытии</div>
<div class="t c " style="left:1134.0px;width:70px;top:15px;">Отключить</div>
<div class="t c " style="left:1134.0px;width:70px;top:31px;">роль</div>
</div>
<div class="a" style="left:254px;top:176px;width:1203px;height:1px;background:#e4e4e4"></div>
<svg class="a" style="left:464px;top:170px;" width="6" height="6" viewBox="0 0 6 6"><path d="M6 0 V6 H0 Z" fill="#1f8fc6"/></svg>
<svg class="a" style="left:577px;top:170px;" width="6" height="6" viewBox="0 0 6 6"><path d="M6 0 V6 H0 Z" fill="#1f8fc6"/></svg>
<svg class="a" style="left:645px;top:170px;" width="6" height="6" viewBox="0 0 6 6"><path d="M6 0 V6 H0 Z" fill="#1f8fc6"/></svg>
<svg class="a" style="left:713px;top:170px;" width="6" height="6" viewBox="0 0 6 6"><path d="M6 0 V6 H0 Z" fill="#1f8fc6"/></svg>
<svg class="a" style="left:781px;top:170px;" width="6" height="6" viewBox="0 0 6 6"><path d="M6 0 V6 H0 Z" fill="#1f8fc6"/></svg>
<svg class="a" style="left:1383px;top:170px;" width="6" height="6" viewBox="0 0 6 6"><path d="M6 0 V6 H0 Z" fill="#1f8fc6"/></svg>
<svg class="a" style="left:1451px;top:170px;" width="6" height="6" viewBox="0 0 6 6"><path d="M6 0 V6 H0 Z" fill="#1f8fc6"/></svg>
<div class="a" style="left:254px;top:176px;width:1203px;height:191px;overflow:hidden">
<div class="a" style="left:0px;top:14px;width:1203px;height:1px;background:#e2e2e2"></div>
<div class="t " style="left:3px;top:-3px;">Самостоятельная регистрация</div>
<div class="t " style="left:220px;top:-3px;">selfRegister</div>
<svg class="a" style="left:358px;top:-3px;" width="13" height="13" viewBox="0 0 13 13"><rect x="0.6" y="0.6" width="11.8" height="11.8" rx="2.5" fill="#fff" stroke="#5e5e5e" stroke-width="1.2"/></svg>
<svg class="a" style="left:426px;top:-3px;" width="13" height="13" viewBox="0 0 13 13"><rect x="0.6" y="0.6" width="11.8" height="11.8" rx="2.5" fill="#fff" stroke="#5e5e5e" stroke-width="1.2"/></svg>
<svg class="a" style="left:494px;top:-3px;" width="13" height="13" viewBox="0 0 13 13"><rect x="0.6" y="0.6" width="11.8" height="11.8" rx="2.5" fill="#fff" stroke="#5e5e5e" stroke-width="1.2"/></svg>
<svg class="a" style="left:1096px;top:-3px;" width="13" height="13" viewBox="0 0 13 13"><rect x="0.6" y="0.6" width="11.8" height="11.8" rx="2.5" fill="#fff" stroke="#5e5e5e" stroke-width="1.2"/></svg>
<svg class="a" style="left:1164px;top:-3px;" width="13" height="13" viewBox="0 0 13 13"><rect x="0" y="0" width="13" height="13" rx="2.5" fill="#1f74e0"/><path d="M3 6.8 L5.5 9.2 L10.2 3.8" stroke="#fff" stroke-width="2" fill="none"/></svg>
<div class="a" style="left:0px;top:36px;width:1203px;height:1px;background:#e2e2e2"></div>
<div class="t " style="left:3px;top:19px;">Категорийный менеджер</div>
<div class="t " style="left:220px;top:19px;">CatManager</div>
<svg class="a" style="left:358px;top:19px;" width="13" height="13" viewBox="0 0 13 13"><rect x="0.6" y="0.6" width="11.8" height="11.8" rx="2.5" fill="#fff" stroke="#5e5e5e" stroke-width="1.2"/></svg>
<svg class="a" style="left:426px;top:19px;" width="13" height="13" viewBox="0 0 13 13"><rect x="0.6" y="0.6" width="11.8" height="11.8" rx="2.5" fill="#fff" stroke="#5e5e5e" stroke-width="1.2"/></svg>
<svg class="a" style="left:494px;top:19px;" width="13" height="13" viewBox="0 0 13 13"><rect x="0.6" y="0.6" width="11.8" height="11.8" rx="2.5" fill="#fff" stroke="#5e5e5e" stroke-width="1.2"/></svg>
<svg class="a" style="left:1096px;top:19px;" width="13" height="13" viewBox="0 0 13 13"><rect x="0.6" y="0.6" width="11.8" height="11.8" rx="2.5" fill="#fff" stroke="#5e5e5e" stroke-width="1.2"/></svg>
<svg class="a" style="left:1164px;top:19px;" width="13" height="13" viewBox="0 0 13 13"><rect x="0.6" y="0.6" width="11.8" height="11.8" rx="2.5" fill="#fff" stroke="#5e5e5e" stroke-width="1.2"/></svg>
<div class="a" style="left:0px;top:58px;width:1203px;height:1px;background:#e2e2e2"></div>
<div class="t " style="left:3px;top:41px;">Директор магазина</div>
<div class="t " style="left:220px;top:41px;">Manager</div>
<svg class="a" style="left:358px;top:41px;" width="13" height="13" viewBox="0 0 13 13"><rect x="0.6" y="0.6" width="11.8" height="11.8" rx="2.5" fill="#fff" stroke="#5e5e5e" stroke-width="1.2"/></svg>
<svg class="a" style="left:426px;top:41px;" width="13" height="13" viewBox="0 0 13 13"><rect x="0.6" y="0.6" width="11.8" height="11.8" rx="2.5" fill="#fff" stroke="#5e5e5e" stroke-width="1.2"/></svg>
<svg class="a" style="left:494px;top:41px;" width="13" height="13" viewBox="0 0 13 13"><rect x="0.6" y="0.6" width="11.8" height="11.8" rx="2.5" fill="#fff" stroke="#5e5e5e" stroke-width="1.2"/></svg>
<svg class="a" style="left:1096px;top:41px;" width="13" height="13" viewBox="0 0 13 13"><rect x="0.6" y="0.6" width="11.8" height="11.8" rx="2.5" fill="#fff" stroke="#5e5e5e" stroke-width="1.2"/></svg>
<svg class="a" style="left:1164px;top:41px;" width="13" height="13" viewBox="0 0 13 13"><rect x="0.6" y="0.6" width="11.8" height="11.8" rx="2.5" fill="#fff" stroke="#5e5e5e" stroke-width="1.2"/></svg>
<div class="a" style="left:0px;top:80px;width:1203px;height:1px;background:#e2e2e2"></div>
<div class="t " style="left:3px;top:63px;">Оператор</div>
<div class="t " style="left:220px;top:63px;">operator</div>
<svg class="a" style="left:358px;top:63px;" width="13" height="13" viewBox="0 0 13 13"><rect x="0.6" y="0.6" width="11.8" height="11.8" rx="2.5" fill="#fff" stroke="#5e5e5e" stroke-width="1.2"/></svg>
<svg class="a" style="left:426px;top:63px;" width="13" height="13" viewBox="0 0 13 13"><rect x="0" y="0" width="13" height="13" rx="2.5" fill="#1f74e0"/><path d="M3 6.8 L5.5 9.2 L10.2 3.8" stroke="#fff" stroke-width="2" fill="none"/></svg>
<svg class="a" style="left:494px;top:63px;" width="13" height="13" viewBox="0 0 13 13"><rect x="0.6" y="0.6" width="11.8" height="11.8" rx="2.5" fill="#fff" stroke="#5e5e5e" stroke-width="1.2"/></svg>
<svg class="a" style="left:1096px;top:63px;" width="13" height="13" viewBox="0 0 13 13"><rect x="0.6" y="0.6" width="11.8" height="11.8" rx="2.5" fill="#fff" stroke="#5e5e5e" stroke-width="1.2"/></svg>
<svg class="a" style="left:1164px;top:63px;" width="13" height="13" viewBox="0 0 13 13"><rect x="0.6" y="0.6" width="11.8" height="11.8" rx="2.5" fill="#fff" stroke="#5e5e5e" stroke-width="1.2"/></svg>
<div class="a" style="left:0px;top:80px;width:1203px;height:22px;background:#d4e4e9"></div>
<div class="a" style="left:0px;top:102px;width:1203px;height:1px;background:#e2e2e2"></div>
<div class="t " style="left:3px;top:85px;">Администратор магазина</div>
<div class="t " style="left:220px;top:85px;">operator1</div>
<svg class="a" style="left:358px;top:85px;" width="13" height="13" viewBox="0 0 13 13"><rect x="0.6" y="0.6" width="11.8" height="11.8" rx="2.5" fill="#fff" stroke="#5e5e5e" stroke-width="1.2"/></svg>
<svg class="a" style="left:426px;top:85px;" width="13" height="13" viewBox="0 0 13 13"><rect x="0" y="0" width="13" height="13" rx="2.5" fill="#1f74e0"/><path d="M3 6.8 L5.5 9.2 L10.2 3.8" stroke="#fff" stroke-width="2" fill="none"/></svg>
<svg class="a" style="left:494px;top:85px;" width="13" height="13" viewBox="0 0 13 13"><rect x="0.6" y="0.6" width="11.8" height="11.8" rx="2.5" fill="#fff" stroke="#5e5e5e" stroke-width="1.2"/></svg>
<svg class="a" style="left:1096px;top:85px;" width="13" height="13" viewBox="0 0 13 13"><rect x="0.6" y="0.6" width="11.8" height="11.8" rx="2.5" fill="#fff" stroke="#5e5e5e" stroke-width="1.2"/></svg>
<svg class="a" style="left:1164px;top:85px;" width="13" height="13" viewBox="0 0 13 13"><rect x="0.6" y="0.6" width="11.8" height="11.8" rx="2.5" fill="#fff" stroke="#5e5e5e" stroke-width="1.2"/></svg>
<div class="a" style="left:0px;top:124px;width:1203px;height:1px;background:#e2e2e2"></div>
<div class="t " style="left:3px;top:107px;">Заведующий склада</div>
<div class="t " style="left:220px;top:107px;">Manager_sklad</div>
<svg class="a" style="left:358px;top:107px;" width="13" height="13" viewBox="0 0 13 13"><rect x="0.6" y="0.6" width="11.8" height="11.8" rx="2.5" fill="#fff" stroke="#5e5e5e" stroke-width="1.2"/></svg>
<svg class="a" style="left:426px;top:107px;" width="13" height="13" viewBox="0 0 13 13"><rect x="0.6" y="0.6" width="11.8" height="11.8" rx="2.5" fill="#fff" stroke="#5e5e5e" stroke-width="1.2"/></svg>
<svg class="a" style="left:494px;top:107px;" width="13" height="13" viewBox="0 0 13 13"><rect x="0.6" y="0.6" width="11.8" height="11.8" rx="2.5" fill="#fff" stroke="#5e5e5e" stroke-width="1.2"/></svg>
<svg class="a" style="left:1096px;top:107px;" width="13" height="13" viewBox="0 0 13 13"><rect x="0.6" y="0.6" width="11.8" height="11.8" rx="2.5" fill="#fff" stroke="#5e5e5e" stroke-width="1.2"/></svg>
<svg class="a" style="left:1164px;top:107px;" width="13" height="13" viewBox="0 0 13 13"><rect x="0.6" y="0.6" width="11.8" height="11.8" rx="2.5" fill="#fff" stroke="#5e5e5e" stroke-width="1.2"/></svg>
<div class="a" style="left:0px;top:146px;width:1203px;height:1px;background:#e2e2e2"></div>
<div class="t " style="left:3px;top:129px;">BI</div>
<div class="t " style="left:220px;top:129px;">bi</div>
<svg class="a" style="left:358px;top:129px;" width="13" height="13" viewBox="0 0 13 13"><rect x="0.6" y="0.6" width="11.8" height="11.8" rx="2.5" fill="#fff" stroke="#5e5e5e" stroke-width="1.2"/></svg>
<svg class="a" style="left:426px;top:129px;" width="13" height="13" viewBox="0 0 13 13"><rect x="0.6" y="0.6" width="11.8" height="11.8" rx="2.5" fill="#fff" stroke="#5e5e5e" stroke-width="1.2"/></svg>
<svg class="a" style="left:494px;top:129px;" width="13" height="13" viewBox="0 0 13 13"><rect x="0.6" y="0.6" width="11.8" height="11.8" rx="2.5" fill="#fff" stroke="#5e5e5e" stroke-width="1.2"/></svg>
<svg class="a" style="left:1096px;top:129px;" width="13" height="13" viewBox="0 0 13 13"><rect x="0.6" y="0.6" width="11.8" height="11.8" rx="2.5" fill="#fff" stroke="#5e5e5e" stroke-width="1.2"/></svg>
<svg class="a" style="left:1164px;top:129px;" width="13" height="13" viewBox="0 0 13 13"><rect x="0.6" y="0.6" width="11.8" height="11.8" rx="2.5" fill="#fff" stroke="#5e5e5e" stroke-width="1.2"/></svg>
<div class="t " style="left:537px;top:129px;">Аналитические отчеты(mobile), Инфо о товаре(mobile)</div>
<div class="a" style="left:0px;top:168px;width:1203px;height:1px;background:#e2e2e2"></div>
<div class="t " style="left:3px;top:151px;">Кассир</div>
<div class="t " style="left:220px;top:151px;">casher</div>
<svg class="a" style="left:358px;top:151px;" width="13" height="13" viewBox="0 0 13 13"><rect x="0.6" y="0.6" width="11.8" height="11.8" rx="2.5" fill="#fff" stroke="#5e5e5e" stroke-width="1.2"/></svg>
<svg class="a" style="left:426px;top:151px;" width="13" height="13" viewBox="0 0 13 13"><rect x="0" y="0" width="13" height="13" rx="2.5" fill="#1f74e0"/><path d="M3 6.8 L5.5 9.2 L10.2 3.8" stroke="#fff" stroke-width="2" fill="none"/></svg>
<svg class="a" style="left:494px;top:151px;" width="13" height="13" viewBox="0 0 13 13"><rect x="0.6" y="0.6" width="11.8" height="11.8" rx="2.5" fill="#fff" stroke="#5e5e5e" stroke-width="1.2"/></svg>
<svg class="a" style="left:1096px;top:151px;" width="13" height="13" viewBox="0 0 13 13"><rect x="0.6" y="0.6" width="11.8" height="11.8" rx="2.5" fill="#fff" stroke="#5e5e5e" stroke-width="1.2"/></svg>
<svg class="a" style="left:1164px;top:151px;" width="13" height="13" viewBox="0 0 13 13"><rect x="0.6" y="0.6" width="11.8" height="11.8" rx="2.5" fill="#fff" stroke="#5e5e5e" stroke-width="1.2"/></svg>
<div class="a" style="left:0px;top:190px;width:1203px;height:1px;background:#e2e2e2"></div>
<div class="t " style="left:3px;top:173px;"></div>
<div class="t " style="left:220px;top:173px;"></div>
<svg class="a" style="left:358px;top:173px;" width="13" height="13" viewBox="0 0 13 13"><rect x="0.6" y="0.6" width="11.8" height="11.8" rx="2.5" fill="#fff" stroke="#5e5e5e" stroke-width="1.2"/></svg>
<svg class="a" style="left:426px;top:173px;" width="13" height="13" viewBox="0 0 13 13"><rect x="0.6" y="0.6" width="11.8" height="11.8" rx="2.5" fill="#fff" stroke="#5e5e5e" stroke-width="1.2"/></svg>
<svg class="a" style="left:494px;top:173px;" width="13" height="13" viewBox="0 0 13 13"><rect x="0.6" y="0.6" width="11.8" height="11.8" rx="2.5" fill="#fff" stroke="#5e5e5e" stroke-width="1.2"/></svg>
<svg class="a" style="left:1096px;top:173px;" width="13" height="13" viewBox="0 0 13 13"><rect x="0.6" y="0.6" width="11.8" height="11.8" rx="2.5" fill="#fff" stroke="#5e5e5e" stroke-width="1.2"/></svg>
<svg class="a" style="left:1164px;top:173px;" width="13" height="13" viewBox="0 0 13 13"><rect x="0.6" y="0.6" width="11.8" height="11.8" rx="2.5" fill="#fff" stroke="#5e5e5e" stroke-width="1.2"/></svg>
<div class="a" style="left:216px;top:0px;width:1px;height:191px;background:#e2e2e2"></div>
<div class="a" style="left:329px;top:0px;width:1px;height:191px;background:#e2e2e2"></div>
<div class="a" style="left:397px;top:0px;width:1px;height:191px;background:#e2e2e2"></div>
<div class="a" style="left:465px;top:0px;width:1px;height:191px;background:#e2e2e2"></div>
<div class="a" style="left:533px;top:0px;width:1px;height:191px;background:#e2e2e2"></div>
<div class="a" style="left:1067px;top:0px;width:1px;height:191px;background:#e2e2e2"></div>
<div class="a" style="left:1135px;top:0px;width:1px;height:191px;background:#e2e2e2"></div>
<div class="a" style="left:533px;top:80px;width:535px;height:23px;border:1px solid #0b87ba;box-sizing:border-box;border-radius:1px"></div>
</div>
<svg class="a" style="left:1463px;top:123px;" width="8" height="5" viewBox="0 0 8 5"><path d="M0 4.5 L4 0 L8 4.5 Z" fill="#d9d9d9"/></svg>
<div class="a" style="left:1460px;top:182px;width:13px;height:167px;background:#d6d6d6"></div>
<svg class="a" style="left:1463px;top:355px;" width="8" height="5" viewBox="0 0 8 5"><path d="M0 0 L4 4.5 L8 0 Z" fill="#d9d9d9"/></svg>
<div class="a" style="left:253px;top:372px;width:28px;height:20px;background:#d4e4e9;border-radius:3px"></div>
<div class="a" style="left:1180px;top:372px;width:101px;height:22px;background:#fff;border:1px solid #c6c6c6;border-radius:4px;box-sizing:border-box"></div>
<div class="a" style="left:1285px;top:372px;width:91px;height:22px;background:#fff;border:1px solid #c6c6c6;border-radius:4px;box-sizing:border-box"></div>
<div class="a" style="left:1381px;top:372px;width:95px;height:22px;background:#fff;border:1px solid #c6c6c6;border-radius:4px;box-sizing:border-box"></div>
<div class="t " style="left:1213px;top:376px;">Добавить</div>
<div class="t " style="left:1318px;top:376px;">Удалить</div>
<div class="t " style="left:1396px;top:376px;">Копировать</div>
<svg class="a" style="left:1196px;top:378px;" width="10" height="10" viewBox="0 0 10 10"><path d="M5 0 V10 M0 5 H10" stroke="#333" stroke-width="1.4"/></svg>
<svg class="a" style="left:1301px;top:378px;" width="10" height="10" viewBox="0 0 10 10"><path d="M0 5 H10" stroke="#333" stroke-width="1.4"/></svg>
<div class="a" style="left:254px;top:398px;width:79px;height:22px;background:#d4e4e9;border:1px solid #d0dde2;border-bottom:none;border-radius:3px 3px 0 0;box-sizing:border-box"></div>
<div class="t c " style="left:254.0px;width:79px;top:402px;">Навигатор</div>
<div class="a" style="left:336px;top:398px;width:72px;height:22px;background:#f4f4f4;border:1px solid #d9d9d9;border-bottom:none;border-radius:3px 3px 0 0;box-sizing:border-box"></div>
<div class="t c " style="left:336.0px;width:72px;top:402px;">Свойства</div>
<div class="a" style="left:412px;top:398px;width:99px;height:22px;background:#f4f4f4;border:1px solid #d9d9d9;border-bottom:none;border-radius:3px 3px 0 0;box-sizing:border-box"></div>
<div class="t c " style="left:412.0px;width:99px;top:402px;">Пользователи</div>
<div class="a" style="left:514px;top:398px;width:154px;height:22px;background:#f4f4f4;border:1px solid #d9d9d9;border-bottom:none;border-radius:3px 3px 0 0;box-sizing:border-box"></div>
<div class="t c " style="left:514.0px;width:154px;top:402px;">Настройки приложения</div>
<div class="a" style="left:671px;top:398px;width:191px;height:22px;background:#f4f4f4;border:1px solid #d9d9d9;border-bottom:none;border-radius:3px 3px 0 0;box-sizing:border-box"></div>
<div class="t c " style="left:671.0px;width:191px;top:402px;">Группы типов документов ТСД</div>
<div class="a" style="left:866px;top:398px;width:40px;height:22px;background:#f4f4f4;border:1px solid #d9d9d9;border-bottom:none;border-radius:3px 3px 0 0;box-sizing:border-box"></div>
<div class="t c " style="left:866.0px;width:40px;top:402px;">API</div>
<div class="a" style="left:251px;top:419px;width:1227px;height:1px;background:#d6d6d6"></div>
<div class="a" style="left:255px;top:423px;width:61px;height:21px;background:#d4e4e9;border:1px solid #d0dde2;border-bottom:none;border-radius:3px 3px 0 0;box-sizing:border-box"></div>
<div class="t c " style="left:255.0px;width:61px;top:425.5px;">Дерево</div>
<div class="a" style="left:320px;top:423px;width:68px;height:21px;background:#f4f4f4;border:1px solid #d9d9d9;border-bottom:none;border-radius:3px 3px 0 0;box-sizing:border-box"></div>
<div class="t c " style="left:320.0px;width:68px;top:425.5px;">Таблица</div>
<div class="a" style="left:251px;top:443px;width:1227px;height:1px;background:#d6d6d6"></div>
<div class="a" style="left:253px;top:448px;width:1223px;height:247px;background:#fff;border:1px solid #c8c8c8;border-radius:3px;box-sizing:border-box"></div>
<div class="a" style="left:254px;top:449px;width:1203px;height:55px;background:#f2f2f2"></div>
<div class="a" style="left:363px;top:449px;width:1px;height:245px;background:#e2e2e2"></div>
<div class="a" style="left:864px;top:449px;width:1px;height:245px;background:#e2e2e2"></div>
<div class="a" style="left:1173px;top:449px;width:1px;height:245px;background:#e2e2e2"></div>
<div class="a" style="left:1278px;top:449px;width:1px;height:245px;background:#e2e2e2"></div>
<div class="a" style="left:1346px;top:449px;width:1px;height:245px;background:#e2e2e2"></div>
<div class="a" style="left:1389px;top:449px;width:1px;height:245px;background:#e2e2e2"></div>
<div class="a" style="left:1457px;top:449px;width:1px;height:245px;background:#e2e2e2"></div>
<div class="a" style="left:254px;top:449px;width:1203px;height:55px;overflow:hidden">
<div class="t c " style="left:4.0px;width:100px;top:19.5px;">Дерево</div>
<div class="t c " style="left:210.0px;width:300px;top:19.5px;">Название элемента навигатора</div>
<div class="t c " style="left:615.0px;width:300px;top:19.5px;">Каноническое имя элемента навигатора</div>
<div class="t c " style="left:922.0px;width:100px;top:19.5px;">Доступ</div>
<div class="t c " style="left:1023.5px;width:70px;top:1px;">Порядок</div>
<div class="t c " style="left:1023.5px;width:70px;top:17px;">при</div>
<div class="t c " style="left:1023.5px;width:70px;top:33px;">открытии</div>
<div class="t c " style="left:1093.0px;width:42px;top:1px;">Тольк</div>
<div class="t c " style="left:1093.0px;width:42px;top:17px;">о</div>
<div class="t c " style="left:1093.0px;width:42px;top:33px;">мобил</div>
</div>
<div class="t " style="left:1414px;top:468.5px;">Номер</div>
<svg class="a" style="left:1396px;top:471px;" width="12" height="12" viewBox="0 0 12 12"><circle cx="6" cy="6" r="5.2" fill="none" stroke="#3aa6dc" stroke-width="1.3"/><path d="M3.8 7.2 L6 5 L8.2 7.2" fill="none" stroke="#333" stroke-width="1.2"/></svg>
<svg class="a" style="left:1272px;top:497.5px;" width="6" height="6" viewBox="0 0 6 6"><path d="M6 0 V6 H0 Z" fill="#1f8fc6"/></svg>
<svg class="a" style="left:1340px;top:497.5px;" width="6" height="6" viewBox="0 0 6 6"><path d="M6 0 V6 H0 Z" fill="#1f8fc6"/></svg>
<svg class="a" style="left:1383px;top:497.5px;" width="6" height="6" viewBox="0 0 6 6"><path d="M6 0 V6 H0 Z" fill="#1f8fc6"/></svg>
<div class="a" style="left:254px;top:504px;width:1203px;height:190px;overflow:hidden">
<div class="a" style="left:0px;top:16px;width:1203px;height:1px;background:#e2e2e2"></div>
<div class="t " style="left:113px;top:-1.5px;">Транспорт</div>
<div class="t " style="left:614px;top:-1.5px;">Transport.transportNavigator</div>
<div class="t " style="left:923.5px;top:-1.5px;color:#7a7a7a">По умолчанию</div>
<div class="t r " style="left:1138.6px;width:60px;top:-1.5px;">11</div>
<div class="a" style="left:8px;top:-5px;width:1px;height:21px;border-left:1px dotted #777;width:0"></div>
<div class="a" style="left:10px;top:4.5px;width:7px;height:1px;border-top:1px dotted #777;height:0"></div>
<svg class="a" style="left:19px;top:0px;" width="10" height="10" viewBox="0 0 10 10"><circle cx="5" cy="5" r="4.3" fill="#fff" stroke="#555" stroke-width="1"/><path d="M5 2.5 V7.5 M2.5 5 H7.5" stroke="#444" stroke-width="1"/></svg>
<div class="a" style="left:0px;top:37px;width:1203px;height:1px;background:#e2e2e2"></div>
<div class="t " style="left:113px;top:19.5px;">BI</div>
<div class="t " style="left:614px;top:19.5px;">BI.BI</div>
<div class="t " style="left:923.5px;top:19.5px;color:#7a7a7a">По умолчанию</div>
<div class="t r " style="left:1138.6px;width:60px;top:19.5px;">12</div>
<div class="a" style="left:8px;top:16px;width:1px;height:21px;border-left:1px dotted #777;width:0"></div>
<div class="a" style="left:10px;top:25.5px;width:7px;height:1px;border-top:1px dotted #777;height:0"></div>
<svg class="a" style="left:19px;top:21px;" width="10" height="10" viewBox="0 0 10 10"><circle cx="5" cy="5" r="4.3" fill="#fff" stroke="#555" stroke-width="1"/><path d="M5 2.5 V7.5 M2.5 5 H7.5" stroke="#444" stroke-width="1"/></svg>
<div class="a" style="left:0px;top:58px;width:1203px;height:1px;background:#e2e2e2"></div>
<div class="t " style="left:113px;top:40.5px;">Производство</div>
<div class="t " style="left:614px;top:40.5px;">Manufacturing.manufacturingNavigator</div>
<div class="t " style="left:923.5px;top:40.5px;color:#1e1e1e">Запретить</div>
<div class="t r " style="left:1138.6px;width:60px;top:40.5px;">13</div>
<div class="a" style="left:8px;top:37px;width:1px;height:21px;border-left:1px dotted #777;width:0"></div>
<div class="a" style="left:10px;top:46.5px;width:7px;height:1px;border-top:1px dotted #777;height:0"></div>
<svg class="a" style="left:19px;top:42px;" width="10" height="10" viewBox="0 0 10 10"><circle cx="5" cy="5" r="4.3" fill="#fff" stroke="#555" stroke-width="1"/><path d="M5 2.5 V7.5 M2.5 5 H7.5" stroke="#444" stroke-width="1"/></svg>
<div class="a" style="left:0px;top:79px;width:1203px;height:1px;background:#e2e2e2"></div>
<div class="t " style="left:113px;top:61.5px;">WMS</div>
<div class="t " style="left:614px;top:61.5px;">WMS.WMSNavigator</div>
<div class="t " style="left:923.5px;top:61.5px;color:#1e1e1e">Запретить</div>
<div class="t r " style="left:1138.6px;width:60px;top:61.5px;">14</div>
<div class="a" style="left:8px;top:58px;width:1px;height:21px;border-left:1px dotted #777;width:0"></div>
<div class="a" style="left:10px;top:67.5px;width:7px;height:1px;border-top:1px dotted #777;height:0"></div>
<svg class="a" style="left:19px;top:63px;" width="10" height="10" viewBox="0 0 10 10"><circle cx="5" cy="5" r="4.3" fill="#fff" stroke="#555" stroke-width="1"/><path d="M5 2.5 V7.5 M2.5 5 H7.5" stroke="#444" stroke-width="1"/></svg>
<div class="a" style="left:0px;top:100px;width:1203px;height:1px;background:#e2e2e2"></div>
<div class="t " style="left:113px;top:82.5px;">Документы</div>
<div class="t " style="left:614px;top:82.5px;">Certificate.customsNavigator</div>
<div class="t " style="left:923.5px;top:82.5px;color:#7a7a7a">По умолчанию</div>
<div class="t r " style="left:1138.6px;width:60px;top:82.5px;">15</div>
<div class="a" style="left:8px;top:79px;width:1px;height:21px;border-left:1px dotted #777;width:0"></div>
<div class="a" style="left:10px;top:88.5px;width:7px;height:1px;border-top:1px dotted #777;height:0"></div>
<svg class="a" style="left:19px;top:84px;" width="10" height="10" viewBox="0 0 10 10"><circle cx="5" cy="5" r="4.3" fill="#fff" stroke="#555" stroke-width="1"/><path d="M5 2.5 V7.5 M2.5 5 H7.5" stroke="#444" stroke-width="1"/></svg>
<div class="a" style="left:0px;top:121px;width:1203px;height:1px;background:#e2e2e2"></div>
<div class="t " style="left:113px;top:103.5px;">Администрирование</div>
<div class="t " style="left:614px;top:103.5px;">System.administration</div>
<div class="t " style="left:923.5px;top:103.5px;color:#1e1e1e">Запретить</div>
<div class="t r " style="left:1138.6px;width:60px;top:103.5px;">16</div>
<div class="a" style="left:8px;top:100px;width:1px;height:21px;border-left:1px dotted #777;width:0"></div>
<div class="a" style="left:10px;top:109.5px;width:7px;height:1px;border-top:1px dotted #777;height:0"></div>
<svg class="a" style="left:19px;top:105px;" width="10" height="10" viewBox="0 0 10 10"><circle cx="5" cy="5" r="4.3" fill="#fff" stroke="#555" stroke-width="1"/><path d="M5 2.5 V7.5 M2.5 5 H7.5" stroke="#444" stroke-width="1"/></svg>
<div class="a" style="left:0px;top:121px;width:1203px;height:21px;background:#d4e4e9"></div>
<div class="a" style="left:0px;top:142px;width:1203px;height:1px;background:#e2e2e2"></div>
<div class="t " style="left:113px;top:124.5px;">Чат</div>
<div class="t " style="left:614px;top:124.5px;">Chat.fullChat</div>
<div class="t " style="left:923.5px;top:124.5px;color:#7a7a7a">По умолчанию</div>
<div class="t r " style="left:1138.6px;width:60px;top:124.5px;">17</div>
<div class="a" style="left:8px;top:121px;width:1px;height:21px;border-left:1px dotted #777;width:0"></div>
<div class="a" style="left:10px;top:130.5px;width:7px;height:1px;border-top:1px dotted #777;height:0"></div>
<svg class="a" style="left:20px;top:127px;" width="8" height="8" viewBox="0 0 8 8"><circle cx="4" cy="4" r="3.8" fill="#505050"/></svg>
<div class="a" style="left:0px;top:163px;width:1203px;height:1px;background:#e2e2e2"></div>
<div class="t " style="left:113px;top:145.5px;">Учётная запись</div>
<div class="t " style="left:614px;top:145.5px;">Authentication.account</div>
<div class="t " style="left:923.5px;top:145.5px;color:#1e1e1e">Разрешить</div>
<div class="t r " style="left:1138.6px;width:60px;top:145.5px;">18</div>
<div class="a" style="left:8px;top:142px;width:1px;height:21px;border-left:1px dotted #777;width:0"></div>
<div class="a" style="left:10px;top:151.5px;width:7px;height:1px;border-top:1px dotted #777;height:0"></div>
<svg class="a" style="left:19px;top:147px;" width="10" height="10" viewBox="0 0 10 10"><circle cx="5" cy="5" r="4.3" fill="#fff" stroke="#555" stroke-width="1"/><path d="M5 2.5 V7.5 M2.5 5 H7.5" stroke="#444" stroke-width="1"/></svg>
<div class="a" style="left:0px;top:184px;width:1203px;height:1px;background:#e2e2e2"></div>
<div class="t " style="left:113px;top:166.5px;">Поиск</div>
<div class="t " style="left:614px;top:166.5px;">Security.findNavigator</div>
<div class="t " style="left:923.5px;top:166.5px;color:#7a7a7a">По умолчанию</div>
<div class="t r " style="left:1138.6px;width:60px;top:166.5px;">19</div>
<div class="a" style="left:8px;top:163px;width:1px;height:21px;border-left:1px dotted #777;width:0"></div>
<div class="a" style="left:10px;top:172.5px;width:7px;height:1px;border-top:1px dotted #777;height:0"></div>
<svg class="a" style="left:20px;top:169px;" width="8" height="8" viewBox="0 0 8 8"><circle cx="4" cy="4" r="3.8" fill="#505050"/></svg>
<div class="a" style="left:0px;top:205px;width:1203px;height:1px;background:#e2e2e2"></div>
<div class="t " style="left:113px;top:187.5px;"></div>
<div class="t " style="left:614px;top:187.5px;"></div>
<div class="t " style="left:923.5px;top:187.5px;color:#1e1e1e"></div>
<div class="a" style="left:8px;top:184px;width:1px;height:21px;border-left:1px dotted #777;width:0"></div>
<div class="a" style="left:109px;top:0px;width:1px;height:190px;background:#e2e2e2"></div>
<div class="a" style="left:610px;top:0px;width:1px;height:190px;background:#e2e2e2"></div>
<div class="a" style="left:919px;top:0px;width:1px;height:190px;background:#e2e2e2"></div>
<div class="a" style="left:1024px;top:0px;width:1px;height:190px;background:#e2e2e2"></div>
<div class="a" style="left:1092px;top:0px;width:1px;height:190px;background:#e2e2e2"></div>
<div class="a" style="left:1135px;top:0px;width:1px;height:190px;background:#e2e2e2"></div>
</div>
<svg class="a" style="left:1463px;top:456px;" width="8" height="5" viewBox="0 0 8 5"><path d="M0 4.5 L4 0 L8 4.5 Z" fill="#d9d9d9"/></svg>
<div class="a" style="left:1461px;top:588px;width:12px;height:72px;background:#d6d6d6"></div>
<svg class="a" style="left:1463px;top:682px;" width="8" height="5" viewBox="0 0 8 5"><path d="M0 0 L4 4.5 L8 0 Z" fill="#d9d9d9"/></svg>
<div class="a" style="left:251px;top:721px;width:1227px;height:1px;background:#d6d6d6"></div>
<div class="a" style="left:253px;top:726px;width:42px;height:22px;background:#fff;border:1px solid #c6c6c6;border-radius:4px;box-sizing:border-box"></div>
<svg class="a" style="left:268px;top:730px;" width="12" height="16" viewBox="0 0 12 16"><circle cx="5.6" cy="4.3" r="1.05" fill="#111"/><circle cx="5.6" cy="8.1" r="1.05" fill="#111"/><circle cx="5.6" cy="11.9" r="1.05" fill="#111"/></svg>
<div class="a" style="left:1053px;top:726px;width:42px;height:22px;background:#fff;border:1px solid #c6c6c6;border-radius:4px;box-sizing:border-box"></div>
<div class="a" style="left:1100px;top:726px;width:105px;height:22px;background:#fff;border:1px solid #c6c6c6;border-radius:4px;box-sizing:border-box"></div>
<div class="a" style="left:1210px;top:726px;width:101px;height:22px;background:#fff;border:1px solid #c6c6c6;border-radius:4px;box-sizing:border-box"></div>
<div class="a" style="left:1316px;top:726px;width:63px;height:22px;background:#fff;border:1px solid #c6c6c6;border-radius:4px;box-sizing:border-box"></div>
<div class="a" style="left:1383px;top:726px;width:93px;height:22px;background:#fff;border:1px solid #c6c6c6;border-radius:4px;box-sizing:border-box"></div>
<div class="t " style="left:1132px;top:730px;">Сохранить</div>
<div class="t " style="left:1242.5px;top:730px;">Отменить</div>
<div class="t " style="left:1348px;top:730px;">OK</div>
<div class="t " style="left:1416px;top:730px;">Закрыть</div>
<svg class="a" style="left:255px;top:64px;" width="30" height="24" viewBox="0 0 30 24"><path d="M15.6 5.9 Q13 6.8 10.3 6.2 V11.5 Q10.3 16 15.6 18 Q20.9 16 20.9 11.5 V6.2 Q18.2 6.8 15.6 5.9 Z" fill="#080808"/><path d="M13.7 11.3 L15.5 12.9 L17.7 10.1" stroke="#8a9aa0" stroke-width="1.1" fill="none"/></svg>
<svg class="a" style="left:255px;top:90px;" width="20" height="20" viewBox="0 0 20 20"><circle cx="9.5" cy="10.5" r="4.3" stroke="#9a9a9a" stroke-width="1" fill="none"/><path d="M7.2 10.5 H11.8" stroke="#9a9a9a" stroke-width="1"/></svg>
<svg class="a" style="left:1425px;top:64px;" width="22" height="22" viewBox="0 0 22 22"><path d="M3.3 18.5 L4.2 14.3 L14.6 3.3 L18.4 6.8 L8 17.6 Z" stroke="#2e2e2e" stroke-width="1.1" fill="none" stroke-linejoin="round"/><path d="M12.6 5.4 L16.4 9" stroke="#45b8e9" stroke-width="1.1"/></svg>
<svg class="a" style="left:1450px;top:62px;" width="26" height="26" viewBox="0 0 26 26"><path d="M6.3 10.5 V5.5 H11 M17.5 21.2 H22.2 V16.5" stroke="#2e2e2e" stroke-width="1.2" fill="none"/><path d="M17.5 5.5 H22.2 V10.5 M6.3 16.5 V21.2 H11" stroke="#45b8e9" stroke-width="1.2" fill="none"/></svg>
<svg class="a" style="left:252px;top:370px;" width="250" height="25" viewBox="0 0 250 25">
<circle cx="9" cy="8.1" r="1.6" stroke="#45b8e9" stroke-width="1.4" fill="none" stroke-width="1.2"/><circle cx="9" cy="12.9" r="1.6" stroke="#45b8e9" stroke-width="1.4" fill="none" stroke-width="1.2"/><circle cx="9" cy="17.8" r="1.6" stroke="#45b8e9" stroke-width="1.4" fill="none" stroke-width="1.2"/>
<path d="M13.8 8.2 H22.6 M13.8 13 H22.6 M13.8 17.9 H22.6" stroke="#222" stroke-width="1.4" fill="none"/>
<rect x="35.4" y="5.5" width="15.3" height="15" rx="1" stroke="#222" stroke-width="1.4" fill="none"/>
<path d="M40.5 5.5 V20.5 M45.7 5.5 V20.5 M35.4 10.4 H50.7 M35.4 15.4 H50.7" stroke="#45b8e9" stroke-width="1.4" fill="none" stroke-width="1.2"/>
<path d="M67.5 7.4 H82.4 M71.5 15.4 H78.4" stroke="#222" stroke-width="1.4" fill="none" stroke-width="1.1"/><path d="M69.5 11.5 H80.4 M73.5 19.4 H76.8" stroke="#45b8e9" stroke-width="1.4" fill="none" stroke-width="1.1"/>
</svg>
<svg class="a" style="left:252px;top:370px;" width="30" height="25" viewBox="0 0 30 25"><path d="M12.59 11.69 L12.69 12.47 L14.49 13.18 L14.09 15.23 L12.16 15.21 L11.77 15.89 L11.29 16.52 L12.06 18.29 L10.33 19.46 L8.97 18.08 L8.21 18.29 L7.43 18.39 L6.72 20.19 L4.67 19.79 L4.69 17.86 L4.01 17.47 L3.38 16.99 L1.61 17.76 L0.44 16.03 L1.82 14.67 L1.61 13.91 L1.51 13.13 L-0.29 12.42 L0.11 10.37 L2.04 10.39 L2.43 9.71 L2.91 9.08 L2.14 7.31 L3.87 6.14 L5.23 7.52 L5.99 7.31 L6.77 7.21 L7.48 5.41 L9.53 5.81 L9.51 7.74 L10.19 8.13 L10.82 8.61 L12.59 7.84 L13.76 9.57 L12.38 10.93 Z" stroke="#222" stroke-width="1.2" fill="none" stroke-linejoin="round" transform="translate(100 0)"/><circle cx="107.1" cy="12.8" r="2.5" stroke="#45b8e9" stroke-width="1.4" fill="none" stroke-width="1.3"/></svg>
<svg class="a" style="left:376px;top:370px;" width="125" height="25" viewBox="0 0 125 25">
<text x="9.3" y="9.3" font-size="5.5" font-weight="bold" fill="#45b8e9" text-anchor="middle" font-family="Liberation Sans">1</text>
<text x="9.3" y="15.4" font-size="5.5" font-weight="bold" fill="#45b8e9" text-anchor="middle" font-family="Liberation Sans">2</text>
<text x="9.3" y="21.5" font-size="5.5" font-weight="bold" fill="#45b8e9" text-anchor="middle" font-family="Liberation Sans">3</text>
<path d="M13.7 7.4 H22.6 M13.7 13.3 H22.6 M13.7 19.4 H22.6" stroke="#222" stroke-width="1.4" fill="none" stroke-width="1.2"/>
<path d="M35.6 6.3 H50.5 M35.6 10.3 H50.5 M35.6 14.5 H41.6 M35.6 18.6 H41.6" stroke="#222" stroke-width="1.4" fill="none" stroke-width="1.2"/>
<path d="M47.5 13.3 V19.9 M44.2 16.6 H50.8" stroke="#45b8e9" stroke-width="1.4" fill="none" stroke-width="1.2"/>
<path d="M72.7 8.1 H67.9 V19.8 H79.6 V14.5" stroke="#222" stroke-width="1.4" fill="none" stroke="#333" stroke-width="1.4"/>
<path d="M74.7 13.3 L82.2 5.8 M77 5.7 H82.4 V11.1" stroke="#45b8e9" stroke-width="1.4" fill="none" stroke-width="1.4"/>
<path d="M99.4 17.4 V8.1 H109.5 M106.7 5.3 L109.5 8.1 L106.7 10.9" stroke="#222" stroke-width="1.4" fill="none" stroke-width="1.2"/>
<path d="M112.7 8.1 H114.7 V17.4 H104.4 M107 14.6 L104.2 17.4 L107 20.2" stroke="#45b8e9" stroke-width="1.4" fill="none" stroke-width="1.2"/>
</svg>
<svg class="a" style="left:252px;top:696px;" width="90" height="24" viewBox="0 0 90 24">
<path d="M7.3 6.4 H22.7 M11.2 14.4 H18.5" stroke="#222" stroke-width="1.1"/><path d="M9.4 10.4 H20.6 M13.3 18.4 H16.7" stroke="#45b8e9" stroke-width="1.1"/>
<rect x="41" y="6.8" width="12" height="12.2" rx="1.8" stroke="#555" stroke-width="1.4" fill="none"/>
<path d="M43.2 4.8 H50.8" stroke="#45b8e9" stroke-width="1.6"/><path d="M47 10 V16 M44 13 H50" stroke="#45b8e9" stroke-width="1.2"/>
<rect x="68" y="8.9" width="10.2" height="10.2" rx="1.3" stroke="#333" stroke-width="1.4" fill="none"/>
<path d="M69.4 6.4 H80.6 V17.3 M72.7 4.4 H82.7 V14.5" stroke="#45b8e9" stroke-width="1.1" fill="none"/>
<path d="M73.3 10.8 V16.4 M70.5 13.6 H76.1" stroke="#45b8e9" stroke-width="1.1"/>
</svg>
<svg class="a" style="left:1050px;top:724px;" width="200" height="26" viewBox="0 0 200 26">
<path d="M19.4 12.2 Q20.5 8.6 24.2 8.6 Q26.8 8.6 28.4 10.4" stroke="#333" stroke-width="1.3" fill="none"/><path d="M30.2 7.8 L30 12.2 L26 11.6 Z" fill="#333"/>
<path d="M29.2 12.9 Q28.2 16.4 24.4 16.4 Q21.6 16.4 20 14.6" stroke="#45b8e9" stroke-width="1.3" fill="none"/><path d="M18.3 17.8 L18.5 13.6 L22.5 14.2 Z" fill="#45b8e9"/>
<path d="M65.5 7.7 H72.5 L76.1 11.3 V17 Q76.1 18.6 74.5 18.6 H65.5 Q64 18.6 64 17 V9.3 Q64 7.7 65.5 7.7 Z" stroke="#333" stroke-width="1.2" fill="none"/>
<path d="M66.2 16.6 V12.9 H73.8 V16.6" stroke="#45b8e9" stroke-width="1.2" fill="none"/>
<path d="M174 9.6 H185.5" stroke="#45b8e9" stroke-width="1.1"/><path d="M177.8 9.3 V7.8 H181.7 V9.3" stroke="#45b8e9" stroke-width="1"/>
<path d="M176.3 11.8 V17.2 Q176.3 18.6 177.7 18.6 H182.2 Q183.6 18.6 183.6 17.2 V11.8" stroke="#333" stroke-width="1.2" fill="none"/>
</svg>
<svg class="a" style="left:1320px;top:724px;" width="100" height="26" viewBox="0 0 100 26">
<path d="M10.1 14.3 L13.4 17.6 L21.5 8.4" stroke="#222" stroke-width="1.3" fill="none"/>
<path d="M79.2 8.9 L88.8 17.5 M88.8 8.9 L79.2 17.5" stroke="#222" stroke-width="1.3"/>
</svg>
<svg class="a" style="left:233px;top:68px;" width="9" height="6" viewBox="0 0 9 6"><path d="M0.5 5 L4.5 0.8 L8.5 5 Z" fill="#e0e0e0"/></svg>
<svg class="a" style="left:233px;top:722px;" width="9" height="6" viewBox="0 0 9 6"><path d="M0.5 0.8 L4.5 5 L8.5 0.8 Z" fill="#e0e0e0"/></svg>
<svg class="a" style="left:5px;top:738px;" width="6" height="9" viewBox="0 0 6 9"><path d="M5 0.5 L0.8 4.5 L5 8.5 Z" fill="#e0e0e0"/></svg>
<svg class="a" style="left:218px;top:738px;" width="6" height="9" viewBox="0 0 6 9"><path d="M0.8 0.5 L5 4.5 L0.8 8.5 Z" fill="#e0e0e0"/></svg>
<div class="a" style="left:1132px;top:6px;width:66px;height:51px;border:3px solid #f53d42;box-sizing:border-box"></div>
<div class="a" style="left:1175px;top:368px;width:305px;height:33px;border:3px solid #f53d42;box-sizing:border-box"></div>
<div class="a" style="left:250px;top:394px;width:667px;height:29px;border:3px solid #f53d42;box-sizing:border-box"></div>
<div class="a" style="left:22px;top:663px;width:188px;height:28px;border:3px solid #f53d42;box-sizing:border-box"></div>
<div class="a" style="left:13px;top:605px;width:92px;height:3px;background:#f53d42;border-radius:2px"></div>
<svg class="a" style="left:842px;top:347px;" width="345" height="40" viewBox="0 0 345 40"><path d="M15 8.5 L342 35.5" stroke="#f53d42" stroke-width="4.5" stroke-linecap="round"/><path d="M0.8 7.5 L15.6 1.2 L15 16 Z" fill="#f53d42"/></svg>
</body></html>
